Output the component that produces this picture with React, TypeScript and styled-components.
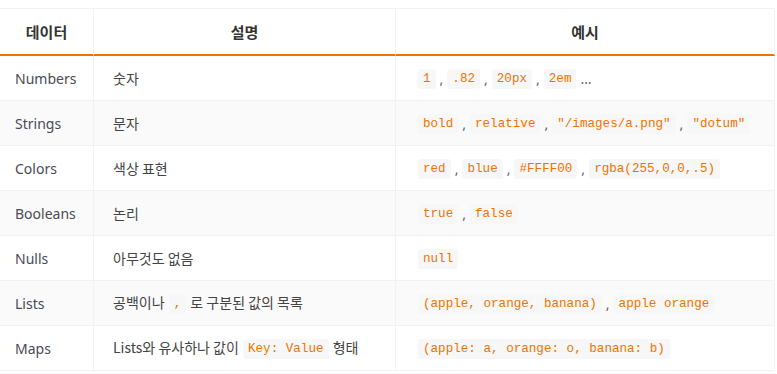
import React from "react";
import styled, { createGlobalStyle } from "styled-components";

const Global = createGlobalStyle`
  html, body { margin: 0; padding: 0; background: #fff; }
  body { font-family: "Noto Sans", "Noto Sans CJK KR", sans-serif; }
`;

const Page = styled.div`
  padding-top: 8px;
`;

const Table = styled.table`
  border-collapse: separate;
  border-spacing: 0;
  table-layout: fixed;
  width: 775px;
  font-size: 14px;
  color: #444;
`;

const Th = styled.th<{ $w: number }>`
  box-sizing: border-box;
  width: ${(p) => p.$w}px;
  height: 48px;
  padding: 0;
  border-top: 1px solid #f2f2f2;
  border-right: 1px solid #f2f2f2;
  border-bottom: 2px solid #ee7300;
  font-family: "Noto Sans CJK KR", "Noto Sans", sans-serif;
  font-size: 15px;
  font-weight: 700;
  color: #333;
  text-align: center;
  vertical-align: middle;
`;

const Tr = styled.tr<{ $alt: boolean }>`
  background: ${(p) => (p.$alt ? "#fafafa" : "#fff")};
`;

const Td = styled.td<{ $pl: number }>`
  box-sizing: border-box;
  height: 45px;
  padding: 0 0 0 ${(p) => p.$pl}px;
  border-right: 1px solid #f2f2f2;
  border-bottom: 1px solid #f2f2f2;
  vertical-align: middle;
  white-space: nowrap;
`;

const Name = styled.span`
  font-family: "Noto Sans", "Noto Sans CJK KR", sans-serif;
  font-size: 14px;
  color: #4a4a55;
`;

const Desc = styled.span`
  font-family: "Noto Sans CJK KR", "Noto Sans", sans-serif;
  font-size: 14px;
  color: #444;
`;

const Code = styled.code`
  display: inline-block;
  font-family: "Liberation Mono", "Courier New", monospace;
  font-size: 12.6px;
  line-height: 20px;
  padding: 0 5px;
  margin: 0 1px;
  background: #f7f7f7;
  border-radius: 3px;
  color: #ee7300;
  vertical-align: middle;
`;

const Sep = styled.span`
  color: #5a6478;
  margin: 0 3px;
  font-size: 14px;
  vertical-align: middle;
`;

type Row = { name: string; desc: React.ReactNode; examples: string[]; tail?: string };

const rows: Row[] = [
  { name: "Numbers", desc: "숫자", examples: ["1", ".82", "20px", "2em"], tail: "…" },
  { name: "Strings", desc: "문자", examples: ["bold", "relative", '"/images/a.png"', '"dotum"'] },
  { name: "Colors", desc: "색상 표현", examples: ["red", "blue", "#FFFF00", "rgba(255,0,0,.5)"] },
  { name: "Booleans", desc: "논리", examples: ["true", "false"] },
  { name: "Nulls", desc: "아무것도 없음", examples: ["null"] },
  {
    name: "Lists",
    desc: (
      <>
        공백이나 <Code>,</Code> 로 구분된 값의 목록
      </>
    ),
    examples: ["(apple, orange, banana)", "apple orange"],
  },
  {
    name: "Maps",
    desc: (
      <>
        Lists와 유사하나 값이 <Code>Key: Value</Code> 형태
      </>
    ),
    examples: ["(apple: a, orange: o, banana: b)"],
  },
];

export default function App() {
  return (
    <Page>
      <Global />
      <Table>
        <thead>
          <tr>
            <Th $w={94}>데이터</Th>
            <Th $w={302}>설명</Th>
            <Th $w={379}>예시</Th>
          </tr>
        </thead>
        <tbody>
          {rows.map((r, i) => (
            <Tr key={r.name} $alt={i % 2 === 1}>
              <Td $pl={15}>
                <Name>{r.name}</Name>
              </Td>
              <Td $pl={19}>
                <Desc>{r.desc}</Desc>
              </Td>
              <Td $pl={21}>
                {r.examples.map((e, j) => (
                  <React.Fragment key={e}>
                    {j > 0 && <Sep>,</Sep>}
                    <Code>{e}</Code>
                  </React.Fragment>
                ))}
                {r.tail && <Sep>{r.tail}</Sep>}
              </Td>
            </Tr>
          ))}
        </tbody>
      </Table>
    </Page>
  );
}
